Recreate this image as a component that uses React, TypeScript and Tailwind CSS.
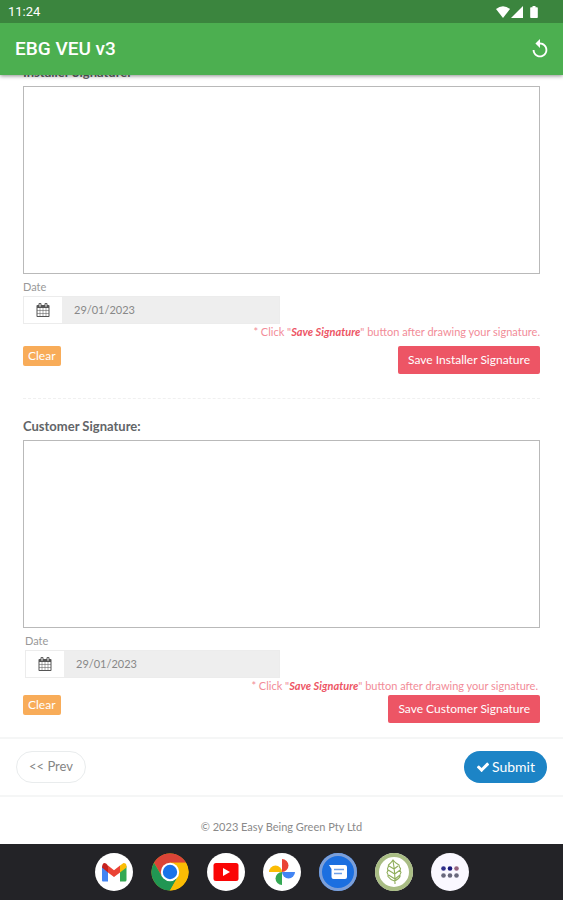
import { useRef } from 'react';
import { MdReplay } from 'react-icons/md';

function CalendarIcon() {
  return (
    <svg viewBox="0 0 1792 1792" className="w-3.5 h-3.5 fill-[#555555]" aria-hidden="true">
      <path d="M192 1664h288v-288h-288v288zm352 0h320v-288h-320v288zm-352-352h288v-320h-288v320zm352 0h320v-320h-320v320zm-352-384h288v-288h-288v288zm736 736h320v-288h-320v288zm-384-736h320v-288h-320v288zm768 736h288v-288h-288v288zm-384-352h320v-320h-320v320zm-352-864v-288q0-13-9.5-22.5t-22.5-9.5h-64q-13 0-22.5 9.5t-9.5 22.5v288q0 13 9.5 22.5t22.5 9.5h64q13 0 22.5-9.5t9.5-22.5zm736 864h288v-320h-288v320zm-384-384h320v-288h-320v288zm384 0h288v-288h-288v288zm32-480v-288q0-13-9.5-22.5t-22.5-9.5h-64q-13 0-22.5 9.5t-9.5 22.5v288q0 13 9.5 22.5t22.5 9.5h64q13 0 22.5-9.5t9.5-22.5zm384-64v1280q0 52-38 90t-90 38h-1408q-52 0-90-38t-38-90v-1280q0-52 38-90t90-38h128v-96q0-66 47-113t113-47h64q66 0 113 47t47 113v96h384v-96q0-66 47-113t113-47h64q66 0 113 47t47 113v96h128q52 0 90 38t38 90z" />
    </svg>
  );
}

function CheckIcon() {
  return (
    <svg viewBox="0 0 1792 1792" className="w-3.5 h-3.5 fill-white" aria-hidden="true">
      <path d="M1671 566q0 40-28 68l-724 724-136 136q-28 28-68 28t-68-28l-136-136-362-362q-28-28-28-68t28-68l136-136q28-28 68-28t68 28l294 295 656-657q28-28 68-28t68 28l136 136q28 28 28 68z" />
    </svg>
  );
}

function StatusBar() {
  return (
    <div className="h-[23px] bg-[#3b853e] flex items-center justify-between pl-2 pr-6 text-white">
      <span className="text-[13px]">11:24</span>
      <svg viewBox="0 0 44 14" className="w-11 h-3.5 fill-white" aria-hidden="true">
        <path d="M1 4Q8-1.500 15 4L8 13z" />
        <path d="M28 1v12H16z" />
        <path d="M36 2.200h1.500V1h3v1.200H42q.8 0 .8.800v9.200q0 .8-.8.800h-6q-.8 0-.8-.8V3q0-.8.8-.8z" />
      </svg>
    </div>
  );
}

type SignatureProps = {
  id: string;
  title: string;
  saveLabel: string;
  dateClass: string;
  hintClass: string;
  actionsClass: string;
};

function SignatureSection({ id, title, saveLabel, dateClass, hintClass, actionsClass }: SignatureProps) {
  const canvasRef = useRef<HTMLCanvasElement>(null);

  const handleClear = () => {
    const canvas = canvasRef.current;
    canvas?.getContext('2d')?.clearRect(0, 0, canvas.width, canvas.height);
  };

  return (
    <section>
      <h2 className="text-[13px] leading-5 font-bold text-[#626568] mb-1">{title}</h2>
      <canvas ref={canvasRef} aria-label={title} className="block w-full h-[188px] bg-white border border-[#b9b9b9]" />

      {/* Date */}
      <div className={dateClass}>
        <label htmlFor={`${id}-date`} className="block text-[11px] leading-4 text-[#999999]">Date</label>
        <div className="flex h-7 mt-px border border-[#ececec]">
          <span className="w-[38px] shrink-0 flex items-center justify-center bg-white">
            <CalendarIcon />
          </span>
          <input
            id={`${id}-date`}
            type="text"
            readOnly
            defaultValue="29/01/2023"
            className="min-w-0 flex-1 bg-[#eeeeee] px-3 text-[11px] text-[#888888] outline-none"
          />
        </div>
      </div>

      <p className={hintClass}>
        * Click "<b className="italic text-[#ed5565]">Save Signature</b>" button after drawing your signature.
      </p>

      {/* Action Buttons */}
      <div className={actionsClass}>
        <button type="button" onClick={handleClear} className="h-5 px-[5px] rounded-xs bg-[#f8ac59] text-xs text-white">
          Clear
        </button>
        <button type="button" className="h-7 px-2.5 rounded-xs bg-[#ed5565] text-xs text-white">
          {saveLabel}
        </button>
      </div>
    </section>
  );
}

function Dock() {
  return (
    <nav aria-label="Apps" className="h-14 shrink-0 bg-[#232327] flex items-center justify-center gap-[18px]">
      <button type="button" aria-label="Gmail" className="size-[38px] rounded-full bg-white">
        <svg viewBox="0 0 38 38" className="size-full">
          <path d="M7 13v14.500q0 1 1 1h5V17z" fill="#4285f4" />
          <path d="M25 17v11.500h5q1.500 0 1.500-1.500V13z" fill="#34a853" />
          <path d="M25 12.500v7l6.500-5V13q0-3-3-3z" fill="#fbbc04" />
          <path d="M13 12.500l6 4.800 6-4.800v7l-6 4.500-6-4.500z" fill="#ea4335" />
          <path d="M8.500 10.200q2-.8 4.500 2.300v7l-6-5q0-3 1.500-4.300z" fill="#c5221f" />
        </svg>
      </button>
      <button type="button" aria-label="Chrome" className="size-[38px] rounded-full">
        <svg viewBox="0 0 38 38" className="size-full">
          <circle cx="19" cy="19" r="18.500" fill="#fbbc04" />
          <path d="M3 9.700A18.500 18.500 0 0 1 35 9.700H19L11 23.500z" fill="#db4437" />
          <path d="M3 9.700A18.500 18.500 0 0 0 19 37.500l8-14H11z" fill="#219653" />
          <path d="M19 9.700h16A18.500 18.500 0 0 1 19 37.500l8-14z" fill="#fbbc04" />
          <circle cx="19" cy="19" r="9.200" fill="white" />
          <circle cx="19" cy="19" r="7.200" fill="#1a73e8" />
        </svg>
      </button>
      <button type="button" aria-label="YouTube" className="size-[38px] rounded-full bg-white">
        <svg viewBox="0 0 38 38" className="size-full">
          <rect x="6.500" y="10" width="25" height="18" rx="2.500" fill="#fa0505" />
          <path d="M16 15v8l7-4z" fill="white" />
        </svg>
      </button>
      <button type="button" aria-label="Photos" className="size-[38px] rounded-full bg-white">
        <svg viewBox="0 0 38 38" className="size-full">
          <path d="M19 6a6.500 6.500 0 0 1 0 13z" fill="#ea4335" />
          <path d="M32 19a6.500 6.500 0 0 1-13 0z" fill="#4285f4" />
          <path d="M19 32a6.500 6.500 0 0 1 0-13z" fill="#34a853" />
          <path d="M6 19a6.500 6.500 0 0 1 13 0z" fill="#fbbc04" />
        </svg>
      </button>
      <button type="button" aria-label="Messages" className="size-[38px] rounded-full bg-[#1b6fe0]">
        <svg viewBox="0 0 38 38" className="size-full">
          <circle cx="19" cy="19" r="17.500" fill="none" stroke="#7c9fd8" strokeWidth="3" />
          <path d="M10 12h16q2 0 2 2v10q0 2-2 2H14.500q-2 0-2-2v-8z" fill="white" />
          <path d="M15 16.500h10M15 20.500h8" stroke="#6ea0e8" strokeWidth="1.500" />
        </svg>
      </button>
      <button type="button" aria-label="EBG VEU" className="size-[38px] rounded-full bg-white">
        <svg viewBox="0 0 38 38" className="size-full" fill="none" stroke="#8fae5b">
          <circle cx="19" cy="19" r="17" stroke="#a9bd84" strokeWidth="4" />
          <path d="M18 7q-2 3-4.500 5 0 2-1 3.500 1 2-.5 4 1.500 2 1 4 2 3 6.500 4.500Q24 26 25 23.500q-.5-2 1-4-1.500-2-.5-4-1.500-1.500-1.500-3.500Q20 10 18 7zM18 8q2 10 2 23M19 16l-5-3M19 16l4-3M19.700 21l-6.500-4M19.700 21l5.500-4M20 26l-6.500-4M20 26l5-4" strokeWidth="1.100" />
        </svg>
      </button>
      <button type="button" aria-label="All apps" className="size-[38px] rounded-full bg-[#faf8ff]">
        <svg viewBox="0 0 38 38" className="size-full">
          <circle cx="12.500" cy="15.500" r="2.300" fill="#30308a" />
          <circle cx="19" cy="15.500" r="2.300" fill="#17177c" />
          <circle cx="25.500" cy="15.500" r="2.300" fill="#94627e" />
          <circle cx="12.500" cy="22.500" r="2.300" fill="#68687c" />
          <circle cx="19" cy="22.500" r="2.300" fill="#68687c" />
          <circle cx="25.500" cy="22.500" r="2.300" fill="#68687c" />
        </svg>
      </button>
    </nav>
  );
}

export default function App() {
  return (
    <div className="min-h-screen flex flex-col bg-white font-[Lato,'Open_Sans',sans-serif]">
      <header className="relative z-10 font-[Roboto,sans-serif] shadow-[0_1px_4px_rgba(0,0,0,0.45)]">
        <StatusBar />
        <div className="h-[52px] bg-[#4caf50] flex items-center justify-between pl-[15px] pr-3 text-white">
          <h1 className="text-[19px] font-medium">EBG VEU v3</h1>
          <button type="button" aria-label="Reload">
            <MdReplay className="size-[22px]" />
          </button>
        </div>
      </header>

      {/* Form, scrolled partly under the header */}
      <main className="px-[23px] -mt-[13px]">
        <SignatureSection
          id="installer"
          title="Installer Signature:"
          saveLabel="Save Installer Signature"
          dateClass="w-1/2 pr-0.5 mt-[5px]"
          hintClass="text-right text-[11px] leading-4 text-[#f28c98]"
          actionsClass="flex items-start justify-between mt-1.5"
        />
        <hr className="mt-6 mb-[17px] border-t border-dashed border-[#f0f0f0]" />
        <SignatureSection
          id="customer"
          title="Customer Signature:"
          saveLabel="Save Customer Signature"
          dateClass="w-1/2 px-0.5 mt-[5px]"
          hintClass="text-right pr-0.5 text-[11px] leading-4 text-[#f28c98]"
          actionsClass="flex items-start justify-between mt-px"
        />
      </main>

      <div className="flex items-center justify-between mt-3.5 px-4 py-3 border-y-2 border-[#f5f6f6]">
        <button type="button" className="h-8 px-3 rounded-full border border-[#e9eced] bg-white text-[13px] text-[#858585]">
          &lt;&lt; Prev
        </button>
        <button type="submit" className="h-8 px-3 rounded-full bg-[#1c84c6] text-sm text-white flex items-center gap-0.5">
          <CheckIcon />
          Submit
        </button>
      </div>

      <footer className="flex-1 flex items-center justify-center pt-3 text-[11px] leading-4 text-[#8a8a8a]">
        © 2023 Easy Being Green Pty Ltd
      </footer>

      <Dock />
    </div>
  );
}
